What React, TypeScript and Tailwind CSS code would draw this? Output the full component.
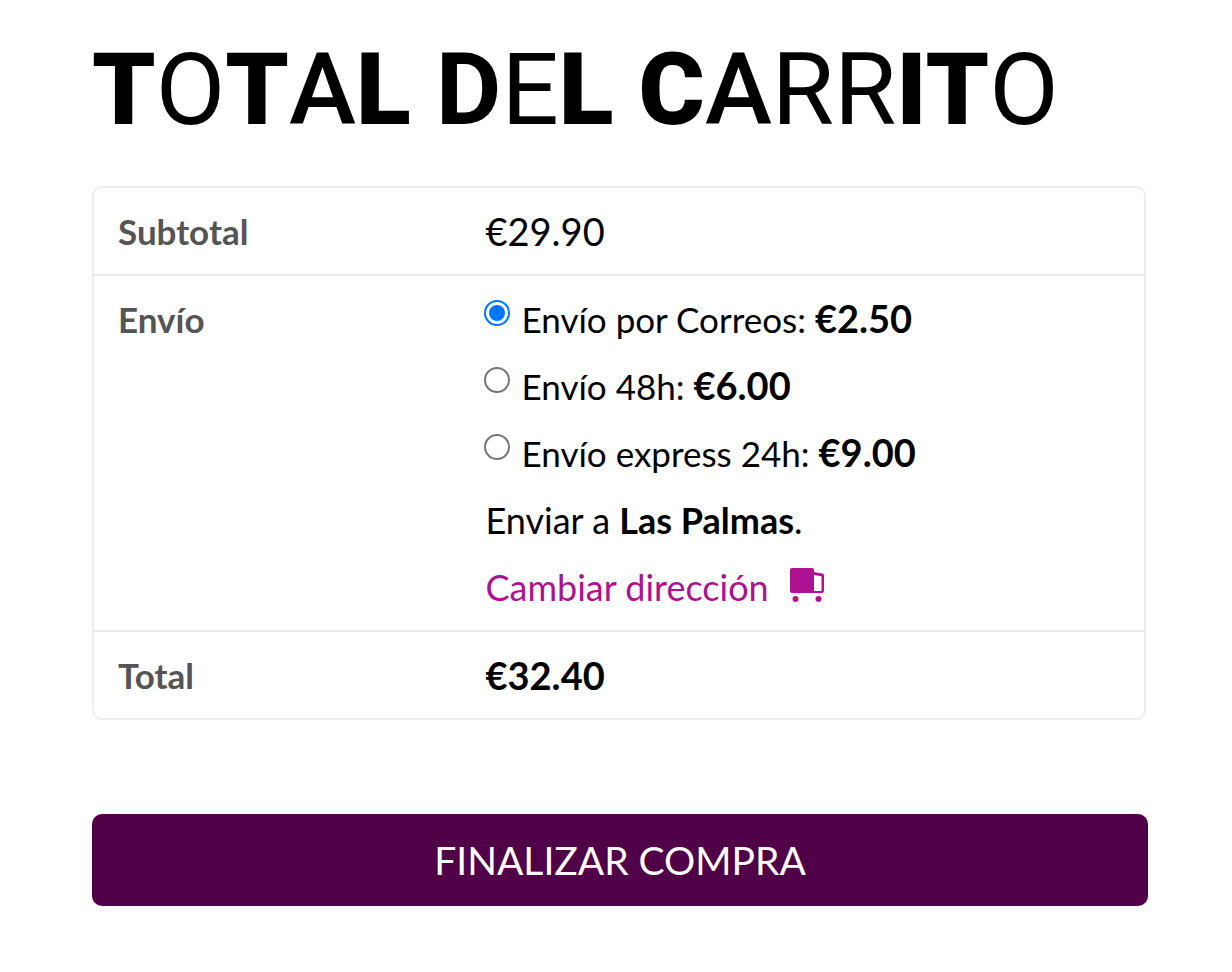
import { useState } from "react";
import clsx from "clsx";

interface MetodoEnvio {
  id: string;
  nombre: string;
  precio: number;
}

const SUBTOTAL = 29.9;

const metodos: MetodoEnvio[] = [
  { id: "correos", nombre: "Envío por Correos:", precio: 2.5 },
  { id: "48h", nombre: "Envío 48h:", precio: 6 },
  { id: "express", nombre: "Envío express 24h:", precio: 9 },
];

// Each word of the title is set letter by letter in uneven weights
const titulo = [
  [["T", "font-black"], ["O", "font-normal"], ["T", "font-black"], ["A", "font-medium"], ["L", "font-black"]],
  [["D", "font-bold"], ["E", "font-normal"], ["L", "font-black"]],
  [["C", "font-black"], ["A", "font-medium"], ["R", "font-normal"], ["R", "font-normal"], ["I", "font-black"], ["T", "font-black"], ["O", "font-normal"]],
];

const formatPrecio = (n: number) => `€${n.toFixed(2)}`;

function CamionIcon() {
  return (
    <svg viewBox="0 0 36 36" className="mb-1 h-9 w-9" fill="currentColor" aria-hidden="true">
      <path
        fillRule="evenodd"
        d="M3 1h20a2 2 0 0 1 2 2v2l8.500 1.500a2 2 0 0 1 1.500 2V24a2 2 0 0 1-2 2H3a2 2 0 0 1-2-2V3a2 2 0 0 1 2-2Zm22 7v16h7.500V9.300Z"
      />
      <circle cx="6.500" cy="32" r="3" />
      <circle cx="29.500" cy="32" r="3" />
    </svg>
  );
}

export default function CartTotals() {
  const [metodoId, setMetodoId] = useState("correos");
  const metodo = metodos.find((m) => m.id === metodoId) ?? metodos[0];

  return (
    <main className="min-h-screen bg-white pt-9 pr-[84px] pb-16 pl-[92px] font-['Lato','Open_Sans',sans-serif] text-black">
      <h1 className="font-['Roboto','Lato',sans-serif] text-[101px] leading-[108px] whitespace-nowrap">
        {titulo.map((palabra, i) => (
          <span key={i}>
            {i > 0 && " "}
            {palabra.map(([letra, peso], j) => (
              <span key={j} className={peso}>{letra}</span>
            ))}
          </span>
        ))}
      </h1>

      <div className="mt-[42px] mr-0.5 rounded-[10px] border-2 border-[#ededed]">
        <table className="w-full table-fixed text-left align-top text-[36px] leading-[54px]">
          <tbody className="divide-y-2 divide-[#e8e8e8]">
            <tr>
              <th scope="row" className="w-[35%] px-6 py-4 align-top text-[35px] font-bold text-[#555555]">Subtotal</th>
              <td className="px-6 py-4 text-[38px]">{formatPrecio(SUBTOTAL)}</td>
            </tr>
            <tr>
              <th scope="row" className="px-6 py-4 align-top text-[35px] font-bold text-[#555555]">Envío</th>
              <td className="px-6 py-4">
                <div className="flex flex-col gap-[13px]">
                  {metodos.map((m) => (
                    <div key={m.id} className="-ml-0.5 flex items-start gap-3">
                      <input
                        type="radio"
                        id={`envio-${m.id}`}
                        name="envio"
                        checked={m.id === metodoId}
                        onChange={() => setMetodoId(m.id)}
                        className={clsx(
                          "mt-2 h-[26px] w-[26px] shrink-0 appearance-none rounded-full border-2 bg-white bg-clip-content p-[3px]",
                          "border-[#767676] checked:border-[#0075ff] checked:bg-[#0075ff]"
                        )}
                      />
                      <label htmlFor={`envio-${m.id}`} className="text-[35px]">
                        {m.nombre} <span className="text-[38px] leading-none font-bold">{formatPrecio(m.precio)}</span>
                      </label>
                    </div>
                  ))}
                  <p>
                    Enviar a <strong className="font-bold">Las Palmas</strong>.
                  </p>
                  <a href="#direccion" className="flex items-center gap-5 self-start text-[#ad1290]">
                    Cambiar dirección
                    <CamionIcon />
                  </a>
                </div>
              </td>
            </tr>
            <tr>
              <th scope="row" className="px-6 py-4 align-top text-[35px] font-bold text-[#555555]">Total</th>
              <td className="px-6 py-4 text-[38px] font-bold">{formatPrecio(SUBTOTAL + metodo.precio)}</td>
            </tr>
          </tbody>
        </table>
      </div>

      <button
        type="button"
        className="mt-[94px] h-[92px] w-full rounded-[10px] bg-[#500046] text-[39px] text-white uppercase hover:bg-[#6b005e]"
      >
        Finalizar compra
      </button>
    </main>
  );
}
